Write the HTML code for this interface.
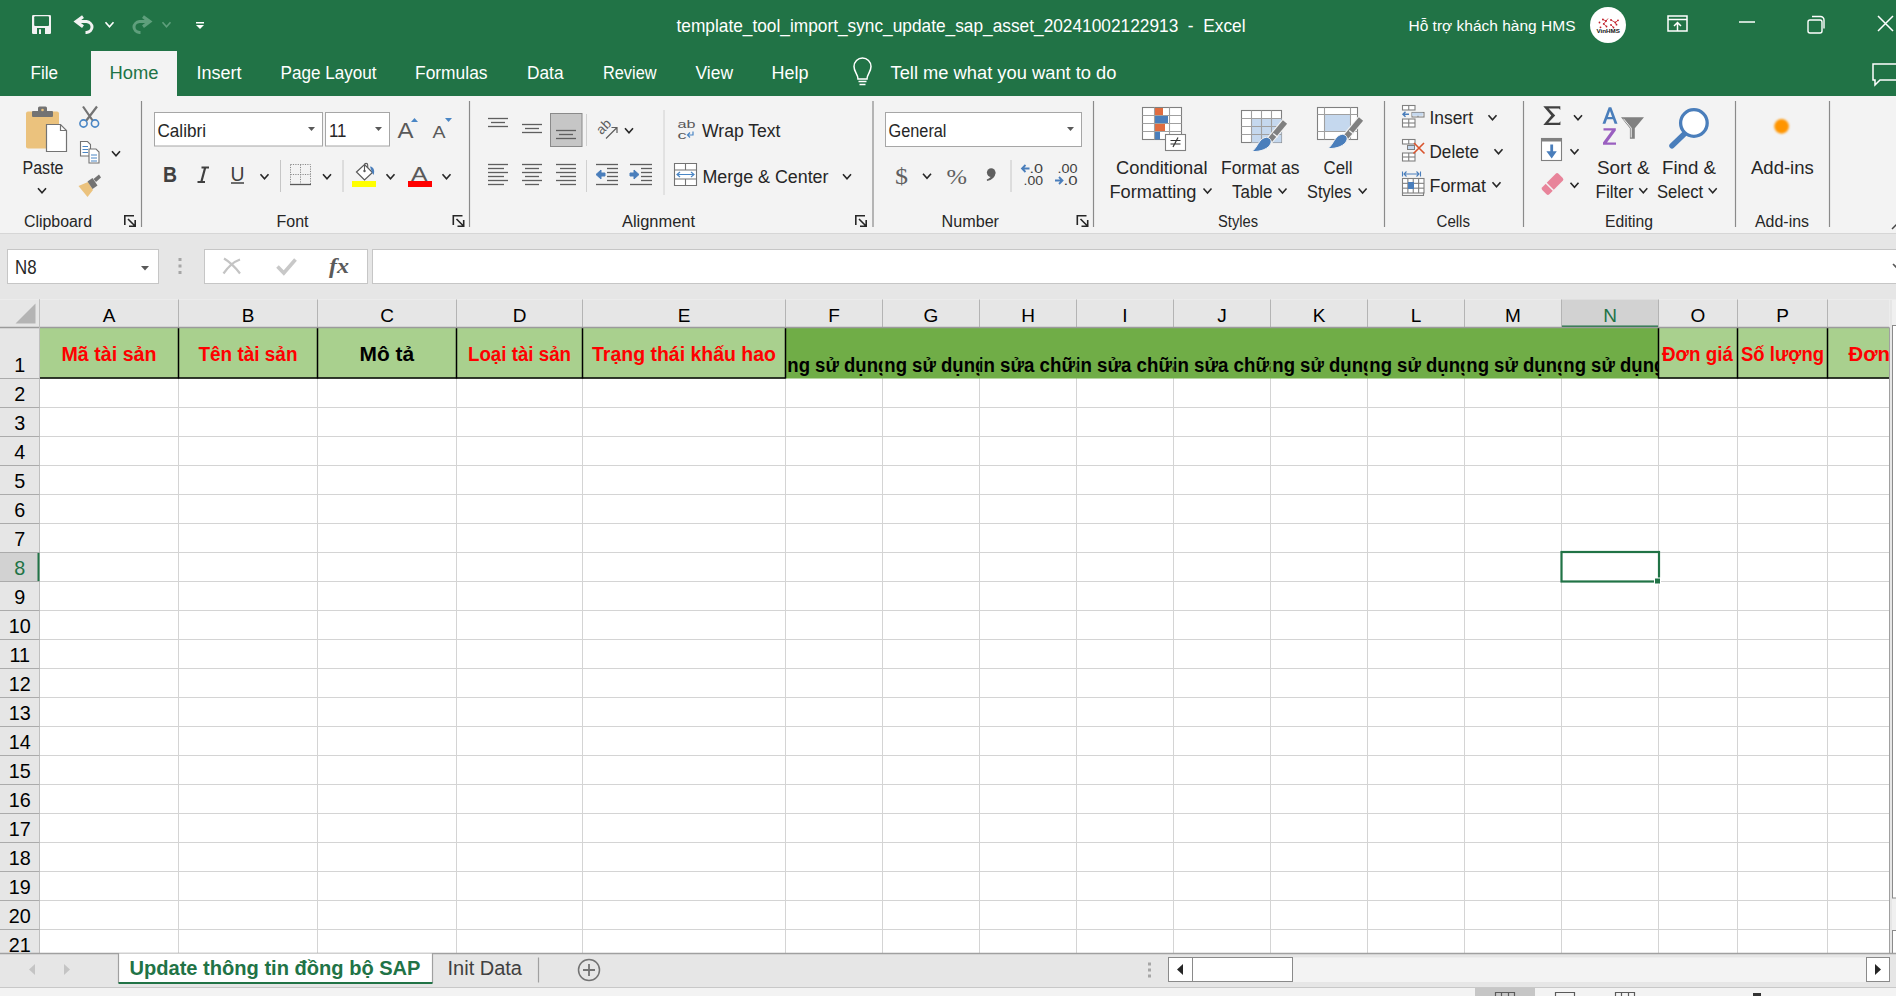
<!DOCTYPE html><html><head><meta charset="utf-8"><style>html,body{margin:0;padding:0;overflow:hidden;background:#fff}svg{display:block}text{font-family:"Liberation Sans", sans-serif}</style></head><body>
<svg width="1896" height="996" viewBox="0 0 1896 996">
<rect x="0" y="0" width="1896" height="96" fill="#217346"/>
<rect x="32" y="15" width="19" height="19" fill="#f2f2f2" rx="1.2"/>
<rect x="34.2" y="16.2" width="14.8" height="9.8" fill="#217346" rx="1"/>
<rect x="37" y="28" width="8" height="6" fill="#217346"/>
<rect x="39" y="29.3" width="2" height="4.7" fill="#f2f2f2"/>
<path d="M77,21.6 H86.5 A6.8,5.6 0 0 1 86.5,32.6 H85.5" fill="none" stroke="#f2f2f2" stroke-width="3"/>
<path d="M83,16.6 L76.2,21.6 L83,26.6" fill="none" stroke="#f2f2f2" stroke-width="3.2" stroke-linejoin="miter"/>
<path d="M105.5,22.25 L109.5,26.75 L113.5,22.25" fill="none" stroke="#ffffff" stroke-width="1.6"/>
<path d="M149,21.6 H139.5 A6.8,5.6 0 0 0 139.5,32.6 H140.5" fill="none" stroke="#5f9f7c" stroke-width="3"/>
<path d="M143,16.6 L149.8,21.6 L143,26.6" fill="none" stroke="#5f9f7c" stroke-width="3.2" stroke-linejoin="miter"/>
<path d="M162.5,22.25 L166.5,26.75 L170.5,22.25" fill="none" stroke="#5f9f7c" stroke-width="1.6"/>
<rect x="196" y="22" width="8" height="1.5" fill="#ffffff"/>
<path d="M196,25 h8 l-4,4 z" fill="#ffffff" stroke="none" stroke-width="1"/>
<text x="676.5" y="32" font-size="18.2" fill="#ffffff" font-weight="normal" textLength="569.0" lengthAdjust="spacingAndGlyphs">template_tool_import_sync_update_sap_asset_20241002122913  -  Excel</text>
<text x="1408.5" y="31" font-size="15.5" fill="#ffffff" font-weight="normal" textLength="167.0" lengthAdjust="spacingAndGlyphs">Hỗ trợ khách hàng HMS</text>
<circle cx="1608" cy="25" r="18" fill="#ffffff"/>
<path d="M1602.9,19.5 L1606,21 L1608,18.5 M1606,21 L1603.7,23.9 L1606.5,26.5 M1611,24.9 L1613.5,27.5 M1615.3,22.5 L1618,20.3 M1615.3,22.5 L1616.5,24.7 M1611,20 L1615.3,22.5" fill="none" stroke="#c0202a" stroke-width="0.8"/>
<circle cx="1599.5" cy="22.5" r="0.9" fill="#c0202a"/>
<circle cx="1602.9" cy="19.5" r="0.9" fill="#c0202a"/>
<circle cx="1606" cy="21" r="0.9" fill="#c0202a"/>
<circle cx="1603.7" cy="23.9" r="0.9" fill="#c0202a"/>
<circle cx="1606.5" cy="26.5" r="0.9" fill="#c0202a"/>
<circle cx="1600.5" cy="27.3" r="0.9" fill="#c0202a"/>
<circle cx="1611" cy="20" r="0.9" fill="#c0202a"/>
<circle cx="1611" cy="24.9" r="0.9" fill="#c0202a"/>
<circle cx="1613.5" cy="27.5" r="0.9" fill="#c0202a"/>
<circle cx="1615.3" cy="22.5" r="0.9" fill="#c0202a"/>
<circle cx="1618" cy="20.3" r="0.9" fill="#c0202a"/>
<circle cx="1616.5" cy="24.7" r="0.9" fill="#c0202a"/>
<text x="1596.5" y="32.8" font-size="5.2" fill="#111" font-weight="bold" textLength="23.5" lengthAdjust="spacingAndGlyphs">VinHMS</text>
<path d="M1668,16 h19 v15 h-19 z M1668,19.5 h19" fill="none" stroke="#ffffff" stroke-width="1.5"/>
<path d="M1677.5,31 v-8 M1674,26 l3.5,-3.5 l3.5,3.5" fill="none" stroke="#ffffff" stroke-width="1.5"/>
<line x1="1739" y1="22" x2="1755" y2="22" stroke="#ffffff" stroke-width="1.5"/>
<path d="M1810,20 h10 a2,2 0 0 1 2,2 v9 a2,2 0 0 1 -2,2 h-10 a2,2 0 0 1 -2,-2 v-9 a2,2 0 0 1 2,-2 z" fill="none" stroke="#ffffff" stroke-width="1.4"/>
<path d="M1812,16.5 h8.5 a3.5,3.5 0 0 1 3.5,3.5 v8.5" fill="none" stroke="#ffffff" stroke-width="1.4"/>
<path d="M1878,16 L1893,31 M1893,16 L1878,31" fill="none" stroke="#ffffff" stroke-width="1.5"/>
<rect x="91" y="51" width="86" height="45" fill="#f3f3f3"/>
<text x="30.5" y="79" font-size="18.3" fill="#ffffff" font-weight="normal" textLength="27.5" lengthAdjust="spacingAndGlyphs">File</text>
<text x="109.5" y="79" font-size="18.3" fill="#217346" font-weight="normal" textLength="49.0" lengthAdjust="spacingAndGlyphs">Home</text>
<text x="196.5" y="79" font-size="18.3" fill="#ffffff" font-weight="normal" textLength="45.0" lengthAdjust="spacingAndGlyphs">Insert</text>
<text x="280.5" y="79" font-size="18.3" fill="#ffffff" font-weight="normal" textLength="96.0" lengthAdjust="spacingAndGlyphs">Page Layout</text>
<text x="415.0" y="79" font-size="18.3" fill="#ffffff" font-weight="normal" textLength="72.5" lengthAdjust="spacingAndGlyphs">Formulas</text>
<text x="527.0" y="79" font-size="18.3" fill="#ffffff" font-weight="normal" textLength="36.5" lengthAdjust="spacingAndGlyphs">Data</text>
<text x="603.0" y="79" font-size="18.3" fill="#ffffff" font-weight="normal" textLength="53.5" lengthAdjust="spacingAndGlyphs">Review</text>
<text x="695.5" y="79" font-size="18.3" fill="#ffffff" font-weight="normal" textLength="37.5" lengthAdjust="spacingAndGlyphs">View</text>
<text x="771.5" y="79" font-size="18.3" fill="#ffffff" font-weight="normal" textLength="37.0" lengthAdjust="spacingAndGlyphs">Help</text>
<path d="M858,79 C858,74 854,72 854,66.5 A8.5,8.5 0 0 1 871,66.5 C871,72 867,74 867,79 Z" fill="none" stroke="#ffffff" stroke-width="1.5"/>
<line x1="858.5" y1="81.5" x2="866.5" y2="81.5" stroke="#ffffff" stroke-width="1.5"/>
<line x1="859.5" y1="84.5" x2="865.5" y2="84.5" stroke="#ffffff" stroke-width="1.5"/>
<text x="890.5" y="79" font-size="18.3" fill="#ffffff" font-weight="normal" textLength="226.0" lengthAdjust="spacingAndGlyphs">Tell me what you want to do</text>
<path d="M1873,64 h25 v16 h-18 l-5,5 v-5 h-2 z" fill="none" stroke="#ffffff" stroke-width="1.5"/>
<rect x="0" y="96" width="1896" height="137.5" fill="#f3f3f3"/>
<line x1="0" y1="233.5" x2="1896" y2="233.5" stroke="#d6d6d6" stroke-width="1"/>
<line x1="141.5" y1="101" x2="141.5" y2="227" stroke="#8a8a8a" stroke-width="1.2"/>
<line x1="469.5" y1="101" x2="469.5" y2="227" stroke="#8a8a8a" stroke-width="1.2"/>
<line x1="873" y1="101" x2="873" y2="227" stroke="#8a8a8a" stroke-width="1.2"/>
<line x1="1093.5" y1="101" x2="1093.5" y2="227" stroke="#8a8a8a" stroke-width="1.2"/>
<line x1="1384.5" y1="101" x2="1384.5" y2="227" stroke="#8a8a8a" stroke-width="1.2"/>
<line x1="1523.5" y1="101" x2="1523.5" y2="227" stroke="#8a8a8a" stroke-width="1.2"/>
<line x1="1735.5" y1="101" x2="1735.5" y2="227" stroke="#8a8a8a" stroke-width="1.2"/>
<line x1="1829.5" y1="101" x2="1829.5" y2="227" stroke="#8a8a8a" stroke-width="1.2"/>
<text x="24.0" y="227" font-size="16" fill="#262626" font-weight="normal" textLength="68.0" lengthAdjust="spacingAndGlyphs">Clipboard</text>
<text x="276.5" y="227" font-size="16" fill="#262626" font-weight="normal" textLength="32.0" lengthAdjust="spacingAndGlyphs">Font</text>
<text x="622.0" y="227" font-size="16" fill="#262626" font-weight="normal" textLength="73.0" lengthAdjust="spacingAndGlyphs">Alignment</text>
<text x="941.5" y="227" font-size="16" fill="#262626" font-weight="normal" textLength="57.5" lengthAdjust="spacingAndGlyphs">Number</text>
<text x="1218.0" y="227" font-size="16" fill="#262626" font-weight="normal" textLength="40.0" lengthAdjust="spacingAndGlyphs">Styles</text>
<text x="1436.5" y="227" font-size="16" fill="#262626" font-weight="normal" textLength="33.5" lengthAdjust="spacingAndGlyphs">Cells</text>
<text x="1605.0" y="227" font-size="16" fill="#262626" font-weight="normal" textLength="48.0" lengthAdjust="spacingAndGlyphs">Editing</text>
<text x="1755.0" y="227" font-size="16" fill="#262626" font-weight="normal" textLength="54.0" lengthAdjust="spacingAndGlyphs">Add-ins</text>
<path d="M124.8,225 V215.8 H134" fill="none" stroke="#262626" stroke-width="1.6"/>
<path d="M128,219 L135,226 M135.2,220 V226.2 H129" fill="none" stroke="#262626" stroke-width="1.6"/>
<path d="M453.3,225 V215.8 H462.5" fill="none" stroke="#262626" stroke-width="1.6"/>
<path d="M456.5,219 L463.5,226 M463.7,220 V226.2 H457.5" fill="none" stroke="#262626" stroke-width="1.6"/>
<path d="M855.8,225 V215.8 H865" fill="none" stroke="#262626" stroke-width="1.6"/>
<path d="M859,219 L866,226 M866.2,220 V226.2 H860" fill="none" stroke="#262626" stroke-width="1.6"/>
<path d="M1077.3,225 V215.8 H1086.5" fill="none" stroke="#262626" stroke-width="1.6"/>
<path d="M1080.5,219 L1087.5,226 M1087.7,220 V226.2 H1081.5" fill="none" stroke="#262626" stroke-width="1.6"/>
<path d="M1892,229 l5,-5 l5,5" fill="none" stroke="#444" stroke-width="1.5"/>
<rect x="26" y="111.5" width="33" height="37" fill="#ebc27d" rx="2"/>
<rect x="32" y="111" width="21" height="6" fill="#737373" rx="1"/>
<rect x="38" y="106.5" width="9" height="6" fill="#737373" rx="1.5"/>
<circle cx="42.5" cy="110" r="1.3" fill="#ebc27d"/>
<path d="M46.5,124.5 h14 l6,6 v21 h-20 z" fill="#ffffff" stroke="#737373" stroke-width="1.2"/>
<path d="M60.5,124.5 v6 h6" fill="none" stroke="#737373" stroke-width="1.2"/>
<text x="22.5" y="173.5" font-size="18.3" fill="#262626" font-weight="normal" textLength="41.0" lengthAdjust="spacingAndGlyphs">Paste</text>
<path d="M38.0,188.25 L42,192.75 L46.0,188.25" fill="none" stroke="#262626" stroke-width="1.6"/>
<path d="M83,106.5 L93,121 M97,106.5 L86,121" fill="none" stroke="#737373" stroke-width="2.2"/>
<circle cx="83.5" cy="123.5" r="3.6" fill="none" stroke="#4a86c5" stroke-width="1.6"/>
<circle cx="95" cy="123.5" r="3.6" fill="none" stroke="#4a86c5" stroke-width="1.6"/>
<path d="M80.5,141.5 h7 l3,3 v11.5 h-10 z" fill="#fff" stroke="#737373" stroke-width="1.1"/>
<path d="M89,149 h7 l3,3 v11 h-10 z" fill="#fff" stroke="#737373" stroke-width="1.1"/>
<line x1="82.5" y1="146.5" x2="88" y2="146.5" stroke="#4a86c5" stroke-width="1"/>
<line x1="82.5" y1="149.5" x2="88" y2="149.5" stroke="#4a86c5" stroke-width="1"/>
<line x1="82.5" y1="152.5" x2="88" y2="152.5" stroke="#4a86c5" stroke-width="1"/>
<line x1="91" y1="155" x2="97" y2="155" stroke="#4a86c5" stroke-width="1"/>
<line x1="91" y1="158" x2="97" y2="158" stroke="#4a86c5" stroke-width="1"/>
<line x1="91" y1="161" x2="97" y2="161" stroke="#4a86c5" stroke-width="1"/>
<path d="M112.0,151.25 L116,155.75 L120.0,151.25" fill="none" stroke="#262626" stroke-width="1.6"/>
<path d="M78.5,186 L88,182 L93,190 L87.5,197 Z" fill="#ebc27d" stroke="none" stroke-width="1"/>
<path d="M87.5,181.5 L92.5,178 L97.5,185.5 L92.5,189 Z" fill="#737373" stroke="none" stroke-width="1"/>
<path d="M93.5,179 L99,174.5 L101,177.5 L96,182 Z" fill="#737373" stroke="none" stroke-width="1"/>
<rect x="154.5" y="112.5" width="168" height="33.5" fill="#ffffff" stroke="#a6a6a6" stroke-width="1"/>
<text x="157.5" y="137" font-size="18.5" fill="#262626" font-weight="normal" textLength="48.5" lengthAdjust="spacingAndGlyphs">Calibri</text>
<path d="M308,127 h7 l-3.5,4 z" fill="#595959" stroke="none" stroke-width="1"/>
<rect x="325.5" y="112.5" width="64" height="33.5" fill="#ffffff" stroke="#a6a6a6" stroke-width="1"/>
<text x="329.0" y="137" font-size="18.5" fill="#262626" font-weight="normal" textLength="17.5" lengthAdjust="spacingAndGlyphs">11</text>
<path d="M375,127 h7 l-3.5,4 z" fill="#595959" stroke="none" stroke-width="1"/>
<text x="397.5" y="138" font-size="21.5" fill="#595959" font-weight="normal" textLength="16.0" lengthAdjust="spacingAndGlyphs">A</text>
<path d="M411,122 l3.5,-4 l3.5,4 z" fill="#4a86c5" stroke="none" stroke-width="1"/>
<text x="432.5" y="138" font-size="17" fill="#595959" font-weight="normal" textLength="13.0" lengthAdjust="spacingAndGlyphs">A</text>
<path d="M445,118 h7 l-3.5,4 z" fill="#4a86c5" stroke="none" stroke-width="1"/>
<text x="163.0" y="181.8" font-size="22.5" fill="#404040" font-weight="bold" textLength="14.0" lengthAdjust="spacingAndGlyphs">B</text>
<path d="M201.5,167.5 h7.5 M197.5,182 h7.5 M205.2,167.5 L201.3,182" fill="none" stroke="#404040" stroke-width="2.2"/>
<text x="230.5" y="181" font-size="21" fill="#404040" font-weight="normal" textLength="14.0" lengthAdjust="spacingAndGlyphs">U</text>
<line x1="231" y1="183" x2="244" y2="183" stroke="#404040" stroke-width="1.5"/>
<path d="M260.5,174.25 L264.5,178.75 L268.5,174.25" fill="none" stroke="#262626" stroke-width="1.6"/>
<line x1="280.5" y1="160" x2="280.5" y2="192" stroke="#c6c6c6" stroke-width="1"/>
<path d="M290.5,164.5 h20 v20 M290.5,164.5 v20 M300.5,164.5 v20 M290.5,174.5 h20" fill="none" stroke="#8a8a8a" stroke-width="1" stroke-dasharray="1.2,1.2"/>
<line x1="290" y1="184.5" x2="311" y2="184.5" stroke="#595959" stroke-width="1.3"/>
<path d="M323.0,174.25 L327,178.75 L331.0,174.25" fill="none" stroke="#262626" stroke-width="1.6"/>
<line x1="343" y1="160" x2="343" y2="192" stroke="#c6c6c6" stroke-width="1"/>
<path d="M356.5,172 L364.5,164.5 L372.5,172.5 L364.5,180 Z" fill="#fff" stroke="#595959" stroke-width="1.2"/>
<path d="M364.5,171 V165 a1.6,1.6 0 0 1 3.2,0 V168" fill="none" stroke="#595959" stroke-width="1.1"/>
<circle cx="364.5" cy="171" r="1.2" fill="#595959"/>
<path d="M370,166.5 C374,167 375,171 373.5,175 L372,172.5 Z" fill="#4a7ebb" stroke="none" stroke-width="1"/>
<rect x="352" y="181" width="24" height="6" fill="#ffff00"/>
<path d="M386.5,174.25 L390.5,178.75 L394.5,174.25" fill="none" stroke="#262626" stroke-width="1.6"/>
<text x="411.0" y="180.5" font-size="20" fill="#595959" font-weight="normal" textLength="16.5" lengthAdjust="spacingAndGlyphs">A</text>
<rect x="408" y="181" width="24" height="6" fill="#ff0000"/>
<path d="M442.5,174.25 L446.5,178.75 L450.5,174.25" fill="none" stroke="#262626" stroke-width="1.6"/>
<line x1="488" y1="118.5" x2="508" y2="118.5" stroke="#5f5f5f" stroke-width="1.3"/>
<line x1="488" y1="126.5" x2="508" y2="126.5" stroke="#5f5f5f" stroke-width="1.3"/>
<line x1="491" y1="122.5" x2="505" y2="122.5" stroke="#5f5f5f" stroke-width="1.3"/>
<line x1="522" y1="124.5" x2="542" y2="124.5" stroke="#5f5f5f" stroke-width="1.3"/>
<line x1="522" y1="132.5" x2="542" y2="132.5" stroke="#5f5f5f" stroke-width="1.3"/>
<line x1="525" y1="128.5" x2="539" y2="128.5" stroke="#5f5f5f" stroke-width="1.3"/>
<rect x="550.5" y="113.5" width="31.5" height="33" fill="#c6c6c6" stroke="#8a8a8a" stroke-width="1"/>
<line x1="556" y1="130.5" x2="576" y2="130.5" stroke="#5f5f5f" stroke-width="1.3"/>
<line x1="556" y1="138.5" x2="576" y2="138.5" stroke="#5f5f5f" stroke-width="1.3"/>
<line x1="559" y1="134.5" x2="573" y2="134.5" stroke="#5f5f5f" stroke-width="1.3"/>
<line x1="586.5" y1="114" x2="586.5" y2="146" stroke="#d0d0d0" stroke-width="1"/>
<text x="596.5" y="131" font-size="13.5" fill="#5f5f5f" font-weight="normal" textLength="15.0" lengthAdjust="spacingAndGlyphs" transform="rotate(-45 604 127)">ab</text>
<path d="M606,138.5 L616.5,128 M611.5,127.5 h5.5 v5.5" fill="none" stroke="#5f5f5f" stroke-width="1.2"/>
<path d="M625.0,128.25 L629,132.75 L633.0,128.25" fill="none" stroke="#262626" stroke-width="1.6"/>
<line x1="664" y1="110" x2="664" y2="195" stroke="#d0d0d0" stroke-width="1"/>
<text x="677.5" y="128" font-size="11.5" fill="#595959" font-weight="normal" textLength="18.0" lengthAdjust="spacingAndGlyphs">ab</text>
<text x="677.5" y="139" font-size="11.5" fill="#595959" font-weight="normal" textLength="9.0" lengthAdjust="spacingAndGlyphs">c</text>
<path d="M693,131.5 v3.5 h-5 M690,132.5 l-2.5,2.5 l2.5,2.5" fill="none" stroke="#4a86c5" stroke-width="1.2"/>
<text x="702.0" y="136.9" font-size="18.3" fill="#262626" font-weight="normal" textLength="78.5" lengthAdjust="spacingAndGlyphs">Wrap Text</text>
<line x1="488" y1="164.5" x2="508" y2="164.5" stroke="#5f5f5f" stroke-width="1.3"/>
<line x1="488" y1="172.5" x2="508" y2="172.5" stroke="#5f5f5f" stroke-width="1.3"/>
<line x1="488" y1="180.5" x2="508" y2="180.5" stroke="#5f5f5f" stroke-width="1.3"/>
<line x1="488" y1="168.5" x2="504" y2="168.5" stroke="#5f5f5f" stroke-width="1.3"/>
<line x1="488" y1="176.5" x2="504" y2="176.5" stroke="#5f5f5f" stroke-width="1.3"/>
<line x1="488" y1="184.5" x2="504" y2="184.5" stroke="#5f5f5f" stroke-width="1.3"/>
<line x1="522" y1="164.5" x2="542" y2="164.5" stroke="#5f5f5f" stroke-width="1.3"/>
<line x1="522" y1="172.5" x2="542" y2="172.5" stroke="#5f5f5f" stroke-width="1.3"/>
<line x1="522" y1="180.5" x2="542" y2="180.5" stroke="#5f5f5f" stroke-width="1.3"/>
<line x1="525" y1="168.5" x2="539" y2="168.5" stroke="#5f5f5f" stroke-width="1.3"/>
<line x1="525" y1="176.5" x2="539" y2="176.5" stroke="#5f5f5f" stroke-width="1.3"/>
<line x1="525" y1="184.5" x2="539" y2="184.5" stroke="#5f5f5f" stroke-width="1.3"/>
<line x1="556" y1="164.5" x2="576" y2="164.5" stroke="#5f5f5f" stroke-width="1.3"/>
<line x1="556" y1="172.5" x2="576" y2="172.5" stroke="#5f5f5f" stroke-width="1.3"/>
<line x1="556" y1="180.5" x2="576" y2="180.5" stroke="#5f5f5f" stroke-width="1.3"/>
<line x1="560" y1="168.5" x2="576" y2="168.5" stroke="#5f5f5f" stroke-width="1.3"/>
<line x1="560" y1="176.5" x2="576" y2="176.5" stroke="#5f5f5f" stroke-width="1.3"/>
<line x1="560" y1="184.5" x2="576" y2="184.5" stroke="#5f5f5f" stroke-width="1.3"/>
<line x1="586.5" y1="160" x2="586.5" y2="192" stroke="#d0d0d0" stroke-width="1"/>
<line x1="596" y1="164.5" x2="618" y2="164.5" stroke="#5f5f5f" stroke-width="1.3"/>
<line x1="596" y1="184.5" x2="618" y2="184.5" stroke="#5f5f5f" stroke-width="1.3"/>
<line x1="607" y1="168.5" x2="618" y2="168.5" stroke="#5f5f5f" stroke-width="1.3"/>
<line x1="607" y1="172.5" x2="618" y2="172.5" stroke="#5f5f5f" stroke-width="1.3"/>
<line x1="607" y1="176.5" x2="618" y2="176.5" stroke="#5f5f5f" stroke-width="1.3"/>
<line x1="607" y1="180.5" x2="618" y2="180.5" stroke="#5f5f5f" stroke-width="1.3"/>
<path d="M605,173 h-4 v-3 l-5,4.5 l5,4.5 v-3 h4 z" fill="#4a7ebb" stroke="#4a7ebb" stroke-width="1"/>
<line x1="630" y1="164.5" x2="652" y2="164.5" stroke="#5f5f5f" stroke-width="1.3"/>
<line x1="630" y1="184.5" x2="652" y2="184.5" stroke="#5f5f5f" stroke-width="1.3"/>
<line x1="641" y1="168.5" x2="652" y2="168.5" stroke="#5f5f5f" stroke-width="1.3"/>
<line x1="641" y1="172.5" x2="652" y2="172.5" stroke="#5f5f5f" stroke-width="1.3"/>
<line x1="641" y1="176.5" x2="652" y2="176.5" stroke="#5f5f5f" stroke-width="1.3"/>
<line x1="641" y1="180.5" x2="652" y2="180.5" stroke="#5f5f5f" stroke-width="1.3"/>
<path d="M630,173 h4 v-3 l5,4.5 l-5,4.5 v-3 h-4 z" fill="#4a7ebb" stroke="#4a7ebb" stroke-width="1"/>
<path d="M674.5,163.5 h22 v22 h-22 z M674.5,170 h22 M674.5,179 h22 M685.5,163.5 v6.5 M685.5,179 v6.5" fill="#fff" stroke="#737373" stroke-width="1.1"/>
<path d="M677,174.5 h17 M680,172 l-3,2.5 l3,2.5 M691,172 l3,2.5 l-3,2.5" fill="none" stroke="#4a86c5" stroke-width="1.2"/>
<text x="702.5" y="183" font-size="18.3" fill="#262626" font-weight="normal" textLength="126.0" lengthAdjust="spacingAndGlyphs">Merge &amp; Center</text>
<path d="M843.0,174.25 L847,178.75 L851.0,174.25" fill="none" stroke="#262626" stroke-width="1.6"/>
<rect x="885.5" y="112.5" width="196" height="34" fill="#ffffff" stroke="#a6a6a6" stroke-width="1"/>
<text x="888.5" y="136.6" font-size="18.3" fill="#262626" font-weight="normal" textLength="58.0" lengthAdjust="spacingAndGlyphs">General</text>
<path d="M1067,127 h7 l-3.5,4 z" fill="#595959" stroke="none" stroke-width="1"/>
<text x="895.0" y="184.3" font-size="24" fill="#5f5f5f" font-weight="normal" textLength="13.0" lengthAdjust="spacingAndGlyphs" style="font-family:'Liberation Serif',serif">$</text>
<path d="M923.0,173.75 L927,178.25 L931.0,173.75" fill="none" stroke="#262626" stroke-width="1.6"/>
<text x="946.5" y="184" font-size="20" fill="#5f5f5f" font-weight="normal" textLength="20.5" lengthAdjust="spacingAndGlyphs" style="font-family:'Liberation Serif',serif">%</text>
<circle cx="991.2" cy="172.6" r="4.3" fill="#5f5f5f"/>
<path d="M995.3,172.5 C995.5,177 992,180 987,181 L986.8,179.6 C990,178.5 991.5,176.5 991.8,174 Z" fill="#5f5f5f" stroke="none" stroke-width="1"/>
<line x1="1011" y1="160" x2="1011" y2="192" stroke="#c6c6c6" stroke-width="1"/>
<text x="1029.5" y="172.7" font-size="12" fill="#404040" font-weight="normal" textLength="13.5" lengthAdjust="spacingAndGlyphs">.0</text>
<text x="1023.5" y="184.8" font-size="12" fill="#404040" font-weight="normal" textLength="19.5" lengthAdjust="spacingAndGlyphs">.00</text>
<path d="M1029.5,168.5 h-7 M1025.5,165 l-3.5,3.5 l3.5,3.5" fill="none" stroke="#4a7ebb" stroke-width="1.8"/>
<text x="1057.5" y="172.7" font-size="12" fill="#404040" font-weight="normal" textLength="20.0" lengthAdjust="spacingAndGlyphs">.00</text>
<text x="1063.5" y="184.8" font-size="12" fill="#404040" font-weight="normal" textLength="14.0" lengthAdjust="spacingAndGlyphs">.0</text>
<path d="M1055,180.5 h7 M1059,177 l3.5,3.5 l-3.5,3.5" fill="none" stroke="#4a7ebb" stroke-width="1.8"/>
<rect x="1142.5" y="107.5" width="39" height="32" fill="#ffffff" stroke="#808080" stroke-width="1.1"/>
<rect x="1155" y="108" width="8" height="7" fill="#e06c3f"/>
<rect x="1155" y="115.5" width="13" height="8" fill="#4a7ebb"/>
<rect x="1155" y="123.5" width="10" height="8" fill="#e06c3f"/>
<rect x="1155" y="131.5" width="5" height="8" fill="#4a7ebb"/>
<line x1="1142.5" y1="115.5" x2="1181.5" y2="115.5" stroke="#a0a0a0" stroke-width="1.1"/>
<line x1="1142.5" y1="123.5" x2="1181.5" y2="123.5" stroke="#a0a0a0" stroke-width="1.1"/>
<line x1="1142.5" y1="131.5" x2="1181.5" y2="131.5" stroke="#a0a0a0" stroke-width="1.1"/>
<line x1="1154.5" y1="107.5" x2="1154.5" y2="139.5" stroke="#a0a0a0" stroke-width="1.1"/>
<line x1="1169.5" y1="107.5" x2="1169.5" y2="139.5" stroke="#a0a0a0" stroke-width="1.1"/>
<rect x="1165.5" y="134.5" width="20" height="16" fill="#ffffff" stroke="#808080" stroke-width="1.1"/>
<path d="M1170.5,140.5 h10 M1170.5,144 h10 M1178,137.5 L1173,147" fill="none" stroke="#333" stroke-width="1.2"/>
<text x="1116.0" y="173.7" font-size="18.3" fill="#262626" font-weight="normal" textLength="91.5" lengthAdjust="spacingAndGlyphs">Conditional</text>
<text x="1109.5" y="197.7" font-size="18.3" fill="#262626" font-weight="normal" textLength="87.0" lengthAdjust="spacingAndGlyphs">Formatting</text>
<path d="M1203.5,188.55 L1207.5,193.05 L1211.5,188.55" fill="none" stroke="#262626" stroke-width="1.5"/>
<rect x="1241.5" y="110.5" width="40" height="32" fill="#ffffff" stroke="#808080" stroke-width="1.1"/>
<rect x="1251.5" y="118.5" width="30" height="24" fill="#c5d8ee"/>
<line x1="1241.5" y1="118.5" x2="1281.5" y2="118.5" stroke="#a0a0a0" stroke-width="1.1"/>
<line x1="1241.5" y1="126.5" x2="1281.5" y2="126.5" stroke="#a0a0a0" stroke-width="1.1"/>
<line x1="1241.5" y1="134.5" x2="1281.5" y2="134.5" stroke="#a0a0a0" stroke-width="1.1"/>
<line x1="1251.5" y1="110.5" x2="1251.5" y2="142.5" stroke="#a0a0a0" stroke-width="1.1"/>
<line x1="1261.5" y1="110.5" x2="1261.5" y2="142.5" stroke="#a0a0a0" stroke-width="1.1"/>
<line x1="1271.5" y1="110.5" x2="1271.5" y2="142.5" stroke="#a0a0a0" stroke-width="1.1"/>
<line x1="1269" y1="141" x2="1285" y2="122" stroke="#f3f3f3" stroke-width="7.5"/>
<line x1="1270" y1="140" x2="1285" y2="122" stroke="#808080" stroke-width="5.5"/>
<line x1="1273.2" y1="133.5" x2="1277.8" y2="137.2" stroke="#f3f3f3" stroke-width="1.3"/>
<path d="M1252,151.5 C1257,148 1259,139 1265,137.5 C1269,136.5 1272,140 1271,143 C1269,149 1260,152 1252,151.5 Z" fill="#4a7ebb" stroke="#f3f3f3" stroke-width="1"/>
<text x="1221.0" y="173.7" font-size="18.3" fill="#262626" font-weight="normal" textLength="78.5" lengthAdjust="spacingAndGlyphs">Format as</text>
<text x="1232.0" y="197.7" font-size="18.3" fill="#262626" font-weight="normal" textLength="40.5" lengthAdjust="spacingAndGlyphs">Table</text>
<path d="M1278.5,188.55 L1282.5,193.05 L1286.5,188.55" fill="none" stroke="#262626" stroke-width="1.5"/>
<rect x="1317.5" y="107.5" width="40" height="32" fill="#ffffff" stroke="#808080" stroke-width="1.1"/>
<rect x="1324.5" y="114.5" width="26" height="17" fill="#c5d8ee"/>
<line x1="1317.5" y1="114.5" x2="1357.5" y2="114.5" stroke="#a0a0a0" stroke-width="1.1"/>
<line x1="1317.5" y1="131.5" x2="1357.5" y2="131.5" stroke="#a0a0a0" stroke-width="1.1"/>
<line x1="1324.5" y1="107.5" x2="1324.5" y2="139.5" stroke="#a0a0a0" stroke-width="1.1"/>
<line x1="1350.5" y1="107.5" x2="1350.5" y2="139.5" stroke="#a0a0a0" stroke-width="1.1"/>
<line x1="1345" y1="138" x2="1361" y2="119" stroke="#f3f3f3" stroke-width="7.5"/>
<line x1="1346" y1="137" x2="1361" y2="119" stroke="#808080" stroke-width="5.5"/>
<line x1="1349.2" y1="130.5" x2="1353.8" y2="134.2" stroke="#f3f3f3" stroke-width="1.3"/>
<path d="M1328,148.5 C1333,145 1335,136 1341,134.5 C1345,133.5 1348,137 1347,140 C1345,146 1336,149 1328,148.5 Z" fill="#4a7ebb" stroke="#f3f3f3" stroke-width="1"/>
<text x="1323.5" y="173.7" font-size="18.3" fill="#262626" font-weight="normal" textLength="29.0" lengthAdjust="spacingAndGlyphs">Cell</text>
<text x="1307.0" y="197.7" font-size="18.3" fill="#262626" font-weight="normal" textLength="44.5" lengthAdjust="spacingAndGlyphs">Styles</text>
<path d="M1358.6,188.55 L1362.6,193.05 L1366.6,188.55" fill="none" stroke="#262626" stroke-width="1.5"/>
<rect x="1402.5" y="105.5" width="12.5" height="4.5" fill="#ffffff" stroke="#808080" stroke-width="1.1"/>
<line x1="1408.75" y1="105.5" x2="1408.75" y2="110.0" stroke="#808080" stroke-width="1.1"/>
<rect x="1402.5" y="119.0" width="12.5" height="8" fill="#ffffff" stroke="#808080" stroke-width="1.1"/>
<line x1="1408.75" y1="119.0" x2="1408.75" y2="127.0" stroke="#808080" stroke-width="1.1"/>
<line x1="1402.5" y1="123.0" x2="1415.0" y2="123.0" stroke="#808080" stroke-width="1.1"/>
<rect x="1412.0" y="112.5" width="12" height="4.5" fill="#ffffff" stroke="#808080" stroke-width="1.1"/>
<line x1="1418.0" y1="112.5" x2="1418.0" y2="117.0" stroke="#808080" stroke-width="1.1"/>
<rect x="1412.2" y="112.7" width="10.6" height="3.1" fill="#c5d8ee"/>
<path d="M1409,114.3 h-6 M1405.5,111.8 l-2.5,2.5 l2.5,2.5" fill="none" stroke="#4a7ebb" stroke-width="1.5"/>
<text x="1429.5" y="124" font-size="18.3" fill="#262626" font-weight="normal" textLength="43.5" lengthAdjust="spacingAndGlyphs">Insert</text>
<path d="M1488.5,115.25 L1492.5,119.75 L1496.5,115.25" fill="none" stroke="#262626" stroke-width="1.6"/>
<rect x="1402.5" y="139.5" width="12.5" height="4.5" fill="#ffffff" stroke="#808080" stroke-width="1.1"/>
<line x1="1408.75" y1="139.5" x2="1408.75" y2="144.0" stroke="#808080" stroke-width="1.1"/>
<rect x="1402.5" y="153.0" width="12.5" height="8" fill="#ffffff" stroke="#808080" stroke-width="1.1"/>
<line x1="1408.75" y1="153.0" x2="1408.75" y2="161.0" stroke="#808080" stroke-width="1.1"/>
<line x1="1402.5" y1="157.0" x2="1415.0" y2="157.0" stroke="#808080" stroke-width="1.1"/>
<rect x="1407.5" y="145.5" width="7" height="4" fill="#c5d8ee" stroke="#808080" stroke-width="1"/>
<path d="M1414,143 L1424.5,153.5 M1424,143 L1413.5,153.5" fill="none" stroke="#d9532c" stroke-width="1.6"/>
<text x="1429.5" y="158" font-size="18.3" fill="#262626" font-weight="normal" textLength="49.5" lengthAdjust="spacingAndGlyphs">Delete</text>
<path d="M1494.5,149.25 L1498.5,153.75 L1502.5,149.25" fill="none" stroke="#262626" stroke-width="1.6"/>
<rect x="1402.5" y="178.5" width="21.5" height="14.5" fill="#ffffff" stroke="#808080" stroke-width="1.1"/>
<line x1="1407.875" y1="178.5" x2="1407.875" y2="193.0" stroke="#808080" stroke-width="1.1"/>
<line x1="1413.25" y1="178.5" x2="1413.25" y2="193.0" stroke="#808080" stroke-width="1.1"/>
<line x1="1418.625" y1="178.5" x2="1418.625" y2="193.0" stroke="#808080" stroke-width="1.1"/>
<line x1="1402.5" y1="183.33333333333334" x2="1424.0" y2="183.33333333333334" stroke="#808080" stroke-width="1.1"/>
<line x1="1402.5" y1="188.16666666666666" x2="1424.0" y2="188.16666666666666" stroke="#808080" stroke-width="1.1"/>
<rect x="1408" y="182" width="6" height="7" fill="#4a7ebb"/>
<path d="M1402.5,192.5 v3 h21 v-3" fill="none" stroke="#808080" stroke-width="1.1"/>
<path d="M1404,174 h15 M1406.5,171.5 l-2.5,2.5 l2.5,2.5 M1416.5,171.5 l2.5,2.5 l-2.5,2.5 M1402.5,171.5 v5 M1420.5,171.5 v5" fill="none" stroke="#4a7ebb" stroke-width="1.1"/>
<text x="1429.5" y="192" font-size="18.3" fill="#262626" font-weight="normal" textLength="56.5" lengthAdjust="spacingAndGlyphs">Format</text>
<path d="M1492.5,182.25 L1496.5,186.75 L1500.5,182.25" fill="none" stroke="#262626" stroke-width="1.6"/>
<path d="M1543.3,106.2 H1560.3 V110 L1559,108.5 H1548.6 L1555.2,115.6 L1548.3,122.8 H1559.2 L1560.4,121.2 V124.9 H1543.3 L1551.3,115.6 Z" fill="#404040" stroke="none" stroke-width="1"/>
<path d="M1574.0,115.25 L1578,119.75 L1582.0,115.25" fill="none" stroke="#262626" stroke-width="1.6"/>
<rect x="1541.5" y="138.5" width="20" height="22" fill="#ffffff" stroke="#808080" stroke-width="1.1"/>
<rect x="1541" y="138" width="21" height="3.5" fill="#808080"/>
<path d="M1550.3,144.6 H1553.1 V151.3 H1556.8 L1551.7,158.6 L1546.4,151.3 H1550.3 Z" fill="#4a7ebb" stroke="none" stroke-width="1"/>
<path d="M1570.5,149.25 L1574.5,153.75 L1578.5,149.25" fill="none" stroke="#262626" stroke-width="1.6"/>
<rect x="1541" y="179" width="23" height="10" rx="2" fill="#e8849a" transform="rotate(-45 1552.5 184)"/>
<line x1="1545.7" y1="182.8" x2="1553.7" y2="190.8" stroke="#f3f3f3" stroke-width="1.6"/>
<path d="M1570.5,182.75 L1574.5,187.25 L1578.5,182.75" fill="none" stroke="#262626" stroke-width="1.6"/>
<path d="M1602.5,123.8 L1608.7,107.3 L1611.3,107.3 L1617.5,123.8 H1614.6 L1613,119.3 H1607 L1605.4,123.8 Z M1607.9,116.9 H1612.1 L1610,111 Z" fill="#4a7ebb" stroke="none" stroke-width="1"/>
<path d="M1603.5,128.2 H1615.8 V130.6 L1607,142.4 H1616 V144.8 H1603 V142.4 L1611.8,130.6 H1603.5 Z" fill="#9a5fc0" stroke="none" stroke-width="1"/>
<path d="M1621,117.2 H1644 L1634.8,128.2 V138.8 H1629.9 V128.2 Z" fill="#808080" stroke="none" stroke-width="1"/>
<path d="M1623.5,118.8 L1631.2,128 V137.5" fill="none" stroke="#ffffff" stroke-width="0.9"/>
<text x="1597.0" y="173.7" font-size="18.3" fill="#262626" font-weight="normal" textLength="52.5" lengthAdjust="spacingAndGlyphs">Sort &amp;</text>
<text x="1595.5" y="197.7" font-size="18.3" fill="#262626" font-weight="normal" textLength="38.0" lengthAdjust="spacingAndGlyphs">Filter</text>
<path d="M1639.3,188.25 L1643.3,192.75 L1647.3,188.25" fill="none" stroke="#262626" stroke-width="1.5"/>
<line x1="1684" y1="134.3" x2="1672" y2="145.8" stroke="#4a7ebb" stroke-width="5.5" stroke-linecap="round"/>
<circle cx="1693.9" cy="123" r="13.3" fill="#ffffff" stroke="#4a7ebb" stroke-width="3.3"/>
<text x="1662.0" y="173.7" font-size="18.3" fill="#262626" font-weight="normal" textLength="54.0" lengthAdjust="spacingAndGlyphs">Find &amp;</text>
<text x="1657.0" y="197.7" font-size="18.3" fill="#262626" font-weight="normal" textLength="46.2" lengthAdjust="spacingAndGlyphs">Select</text>
<path d="M1708.7,188.25 L1712.7,192.75 L1716.7,188.25" fill="none" stroke="#262626" stroke-width="1.5"/>
<defs><filter id="bl" x="-50%" y="-50%" width="200%" height="200%"><feGaussianBlur stdDeviation="0.9"/></filter></defs>
<circle cx="1781.6" cy="126.4" r="7.3" fill="#ff9500" filter="url(#bl)"/>
<text x="1751.0" y="173.7" font-size="18.3" fill="#262626" font-weight="normal" textLength="62.8" lengthAdjust="spacingAndGlyphs">Add-ins</text>
<rect x="0" y="234" width="1896" height="65.5" fill="#e6e6e6"/>
<rect x="7.5" y="249.5" width="151" height="34" fill="#ffffff" stroke="#c6c6c6" stroke-width="1"/>
<text x="15.0" y="274" font-size="20.3" fill="#262626" font-weight="normal" textLength="21.5" lengthAdjust="spacingAndGlyphs">N8</text>
<path d="M141,266 h8 l-4,4.5 z" fill="#595959" stroke="none" stroke-width="1"/>
<rect x="178.5" y="258" width="3" height="3" fill="#a6a6a6"/>
<rect x="178.5" y="264.5" width="3" height="3" fill="#a6a6a6"/>
<rect x="178.5" y="271" width="3" height="3" fill="#a6a6a6"/>
<rect x="204.5" y="249.5" width="163" height="34" fill="#ffffff" stroke="#c6c6c6" stroke-width="1"/>
<path d="M224,258.5 C230,262 235,267 240,273.5 M240,259.5 C233,262 228,267 223.5,273.5" fill="none" stroke="#c4c4c4" stroke-width="2.2"/>
<path d="M277.5,266.5 L283.8,273 L295.5,259.5" fill="none" stroke="#c8c8c8" stroke-width="3.6"/>
<text x="329" y="273" font-size="21" fill="#5a5a5a" font-weight="bold" font-style="italic" style="font-family:'Liberation Serif',serif" textLength="20" lengthAdjust="spacingAndGlyphs">fx</text>
<rect x="372.5" y="249.5" width="1540" height="34" fill="#ffffff" stroke="#c6c6c6" stroke-width="1"/>
<path d="M1893,264 l5,5 l5,-5" fill="none" stroke="#595959" stroke-width="1.6"/>
<rect x="0" y="299.5" width="1889.5" height="28" fill="#e6e6e6"/>
<rect x="0" y="327.5" width="39.5" height="668.5" fill="#e6e6e6"/>
<rect x="39.5" y="327.5" width="1850.0" height="624.5" fill="#ffffff"/>
<line x1="39.5" y1="407.5" x2="1889.5" y2="407.5" stroke="#d4d4d4" stroke-width="1"/>
<line x1="39.5" y1="436.5" x2="1889.5" y2="436.5" stroke="#d4d4d4" stroke-width="1"/>
<line x1="39.5" y1="465.5" x2="1889.5" y2="465.5" stroke="#d4d4d4" stroke-width="1"/>
<line x1="39.5" y1="494.5" x2="1889.5" y2="494.5" stroke="#d4d4d4" stroke-width="1"/>
<line x1="39.5" y1="523.5" x2="1889.5" y2="523.5" stroke="#d4d4d4" stroke-width="1"/>
<line x1="39.5" y1="552.5" x2="1889.5" y2="552.5" stroke="#d4d4d4" stroke-width="1"/>
<line x1="39.5" y1="581.5" x2="1889.5" y2="581.5" stroke="#d4d4d4" stroke-width="1"/>
<line x1="39.5" y1="610.5" x2="1889.5" y2="610.5" stroke="#d4d4d4" stroke-width="1"/>
<line x1="39.5" y1="639.5" x2="1889.5" y2="639.5" stroke="#d4d4d4" stroke-width="1"/>
<line x1="39.5" y1="668.5" x2="1889.5" y2="668.5" stroke="#d4d4d4" stroke-width="1"/>
<line x1="39.5" y1="697.5" x2="1889.5" y2="697.5" stroke="#d4d4d4" stroke-width="1"/>
<line x1="39.5" y1="726.5" x2="1889.5" y2="726.5" stroke="#d4d4d4" stroke-width="1"/>
<line x1="39.5" y1="755.5" x2="1889.5" y2="755.5" stroke="#d4d4d4" stroke-width="1"/>
<line x1="39.5" y1="784.5" x2="1889.5" y2="784.5" stroke="#d4d4d4" stroke-width="1"/>
<line x1="39.5" y1="813.5" x2="1889.5" y2="813.5" stroke="#d4d4d4" stroke-width="1"/>
<line x1="39.5" y1="842.5" x2="1889.5" y2="842.5" stroke="#d4d4d4" stroke-width="1"/>
<line x1="39.5" y1="871.5" x2="1889.5" y2="871.5" stroke="#d4d4d4" stroke-width="1"/>
<line x1="39.5" y1="900.5" x2="1889.5" y2="900.5" stroke="#d4d4d4" stroke-width="1"/>
<line x1="39.5" y1="929.5" x2="1889.5" y2="929.5" stroke="#d4d4d4" stroke-width="1"/>
<line x1="39.5" y1="958.5" x2="1889.5" y2="958.5" stroke="#d4d4d4" stroke-width="1"/>
<line x1="178.5" y1="378" x2="178.5" y2="953" stroke="#d4d4d4" stroke-width="1"/>
<line x1="317.5" y1="378" x2="317.5" y2="953" stroke="#d4d4d4" stroke-width="1"/>
<line x1="456.5" y1="378" x2="456.5" y2="953" stroke="#d4d4d4" stroke-width="1"/>
<line x1="582.5" y1="378" x2="582.5" y2="953" stroke="#d4d4d4" stroke-width="1"/>
<line x1="785.5" y1="378" x2="785.5" y2="953" stroke="#d4d4d4" stroke-width="1"/>
<line x1="882.5" y1="378" x2="882.5" y2="953" stroke="#d4d4d4" stroke-width="1"/>
<line x1="979.5" y1="378" x2="979.5" y2="953" stroke="#d4d4d4" stroke-width="1"/>
<line x1="1076.5" y1="378" x2="1076.5" y2="953" stroke="#d4d4d4" stroke-width="1"/>
<line x1="1173.5" y1="378" x2="1173.5" y2="953" stroke="#d4d4d4" stroke-width="1"/>
<line x1="1270.5" y1="378" x2="1270.5" y2="953" stroke="#d4d4d4" stroke-width="1"/>
<line x1="1367.5" y1="378" x2="1367.5" y2="953" stroke="#d4d4d4" stroke-width="1"/>
<line x1="1464.5" y1="378" x2="1464.5" y2="953" stroke="#d4d4d4" stroke-width="1"/>
<line x1="1561.5" y1="378" x2="1561.5" y2="953" stroke="#d4d4d4" stroke-width="1"/>
<line x1="1658.5" y1="378" x2="1658.5" y2="953" stroke="#d4d4d4" stroke-width="1"/>
<line x1="1737.5" y1="378" x2="1737.5" y2="953" stroke="#d4d4d4" stroke-width="1"/>
<line x1="1827.5" y1="378" x2="1827.5" y2="953" stroke="#d4d4d4" stroke-width="1"/>
<rect x="39.5" y="327.5" width="746.0" height="51" fill="#a9d08e"/>
<rect x="785.5" y="327.5" width="873.0" height="51" fill="#70ad47"/>
<rect x="1658.5" y="327.5" width="231.0" height="51" fill="#a9d08e"/>
<line x1="178.5" y1="327.5" x2="178.5" y2="378.5" stroke="#000000" stroke-width="1.5"/>
<line x1="317.5" y1="327.5" x2="317.5" y2="378.5" stroke="#000000" stroke-width="1.5"/>
<line x1="456.5" y1="327.5" x2="456.5" y2="378.5" stroke="#000000" stroke-width="1.5"/>
<line x1="582.5" y1="327.5" x2="582.5" y2="378.5" stroke="#000000" stroke-width="1.5"/>
<line x1="785.5" y1="327.5" x2="785.5" y2="378.5" stroke="#000000" stroke-width="1.5"/>
<line x1="1658.5" y1="327.5" x2="1658.5" y2="378.5" stroke="#000000" stroke-width="1.5"/>
<line x1="1737.5" y1="327.5" x2="1737.5" y2="378.5" stroke="#000000" stroke-width="1.5"/>
<line x1="1827.5" y1="327.5" x2="1827.5" y2="378.5" stroke="#000000" stroke-width="1.5"/>
<line x1="39.5" y1="378" x2="785.5" y2="378" stroke="#000000" stroke-width="1.5"/>
<line x1="1658.5" y1="378" x2="1889.5" y2="378" stroke="#000000" stroke-width="1.5"/>
<rect x="1561.5" y="299.5" width="97" height="28" fill="#d2d2d2"/>
<line x1="1561.5" y1="326.5" x2="1658.5" y2="326.5" stroke="#217346" stroke-width="2"/>
<line x1="39.5" y1="299.5" x2="39.5" y2="327.5" stroke="#b4b4b4" stroke-width="1"/>
<line x1="178.5" y1="299.5" x2="178.5" y2="327.5" stroke="#b4b4b4" stroke-width="1"/>
<line x1="317.5" y1="299.5" x2="317.5" y2="327.5" stroke="#b4b4b4" stroke-width="1"/>
<line x1="456.5" y1="299.5" x2="456.5" y2="327.5" stroke="#b4b4b4" stroke-width="1"/>
<line x1="582.5" y1="299.5" x2="582.5" y2="327.5" stroke="#b4b4b4" stroke-width="1"/>
<line x1="785.5" y1="299.5" x2="785.5" y2="327.5" stroke="#b4b4b4" stroke-width="1"/>
<line x1="882.5" y1="299.5" x2="882.5" y2="327.5" stroke="#b4b4b4" stroke-width="1"/>
<line x1="979.5" y1="299.5" x2="979.5" y2="327.5" stroke="#b4b4b4" stroke-width="1"/>
<line x1="1076.5" y1="299.5" x2="1076.5" y2="327.5" stroke="#b4b4b4" stroke-width="1"/>
<line x1="1173.5" y1="299.5" x2="1173.5" y2="327.5" stroke="#b4b4b4" stroke-width="1"/>
<line x1="1270.5" y1="299.5" x2="1270.5" y2="327.5" stroke="#b4b4b4" stroke-width="1"/>
<line x1="1367.5" y1="299.5" x2="1367.5" y2="327.5" stroke="#b4b4b4" stroke-width="1"/>
<line x1="1464.5" y1="299.5" x2="1464.5" y2="327.5" stroke="#b4b4b4" stroke-width="1"/>
<line x1="1561.5" y1="299.5" x2="1561.5" y2="327.5" stroke="#b4b4b4" stroke-width="1"/>
<line x1="1658.5" y1="299.5" x2="1658.5" y2="327.5" stroke="#b4b4b4" stroke-width="1"/>
<line x1="1737.5" y1="299.5" x2="1737.5" y2="327.5" stroke="#b4b4b4" stroke-width="1"/>
<line x1="1827.5" y1="299.5" x2="1827.5" y2="327.5" stroke="#b4b4b4" stroke-width="1"/>
<line x1="0" y1="327.5" x2="1889.5" y2="327.5" stroke="#9b9b9b" stroke-width="1.3"/>
<line x1="39.5" y1="299.5" x2="39.5" y2="953" stroke="#bfbfbf" stroke-width="1"/>
<path d="M15.5,323.5 L35.5,303.5 V323.5 Z" fill="#b4b4b4" stroke="none" stroke-width="1"/>
<text x="109.0" y="321.5" font-size="19" fill="#000000" text-anchor="middle">A</text>
<text x="248.0" y="321.5" font-size="19" fill="#000000" text-anchor="middle">B</text>
<text x="387.0" y="321.5" font-size="19" fill="#000000" text-anchor="middle">C</text>
<text x="519.5" y="321.5" font-size="19" fill="#000000" text-anchor="middle">D</text>
<text x="684.0" y="321.5" font-size="19" fill="#000000" text-anchor="middle">E</text>
<text x="834.0" y="321.5" font-size="19" fill="#000000" text-anchor="middle">F</text>
<text x="931.0" y="321.5" font-size="19" fill="#000000" text-anchor="middle">G</text>
<text x="1028.0" y="321.5" font-size="19" fill="#000000" text-anchor="middle">H</text>
<text x="1125.0" y="321.5" font-size="19" fill="#000000" text-anchor="middle">I</text>
<text x="1222.0" y="321.5" font-size="19" fill="#000000" text-anchor="middle">J</text>
<text x="1319.0" y="321.5" font-size="19" fill="#000000" text-anchor="middle">K</text>
<text x="1416.0" y="321.5" font-size="19" fill="#000000" text-anchor="middle">L</text>
<text x="1513.0" y="321.5" font-size="19" fill="#000000" text-anchor="middle">M</text>
<text x="1610.0" y="321.5" font-size="19" fill="#217346" text-anchor="middle">N</text>
<text x="1698.0" y="321.5" font-size="19" fill="#000000" text-anchor="middle">O</text>
<text x="1782.5" y="321.5" font-size="19" fill="#000000" text-anchor="middle">P</text>
<rect x="0" y="552.5" width="39.5" height="29" fill="#d2d2d2"/>
<line x1="38.5" y1="552.5" x2="38.5" y2="581.5" stroke="#217346" stroke-width="2"/>
<line x1="0" y1="378.5" x2="39.5" y2="378.5" stroke="#ababab" stroke-width="1"/>
<text x="19.8" y="372.2" font-size="19.8" fill="#000000" text-anchor="middle">1</text>
<line x1="0" y1="407.5" x2="39.5" y2="407.5" stroke="#ababab" stroke-width="1"/>
<text x="19.8" y="401.2" font-size="19.8" fill="#000000" text-anchor="middle">2</text>
<line x1="0" y1="436.5" x2="39.5" y2="436.5" stroke="#ababab" stroke-width="1"/>
<text x="19.8" y="430.2" font-size="19.8" fill="#000000" text-anchor="middle">3</text>
<line x1="0" y1="465.5" x2="39.5" y2="465.5" stroke="#ababab" stroke-width="1"/>
<text x="19.8" y="459.2" font-size="19.8" fill="#000000" text-anchor="middle">4</text>
<line x1="0" y1="494.5" x2="39.5" y2="494.5" stroke="#ababab" stroke-width="1"/>
<text x="19.8" y="488.2" font-size="19.8" fill="#000000" text-anchor="middle">5</text>
<line x1="0" y1="523.5" x2="39.5" y2="523.5" stroke="#ababab" stroke-width="1"/>
<text x="19.8" y="517.2" font-size="19.8" fill="#000000" text-anchor="middle">6</text>
<line x1="0" y1="552.5" x2="39.5" y2="552.5" stroke="#ababab" stroke-width="1"/>
<text x="19.8" y="546.2" font-size="19.8" fill="#000000" text-anchor="middle">7</text>
<line x1="0" y1="581.5" x2="39.5" y2="581.5" stroke="#ababab" stroke-width="1"/>
<text x="19.8" y="575.2" font-size="19.8" fill="#217346" text-anchor="middle">8</text>
<line x1="0" y1="610.5" x2="39.5" y2="610.5" stroke="#ababab" stroke-width="1"/>
<text x="19.8" y="604.2" font-size="19.8" fill="#000000" text-anchor="middle">9</text>
<line x1="0" y1="639.5" x2="39.5" y2="639.5" stroke="#ababab" stroke-width="1"/>
<text x="19.8" y="633.2" font-size="19.8" fill="#000000" text-anchor="middle">10</text>
<line x1="0" y1="668.5" x2="39.5" y2="668.5" stroke="#ababab" stroke-width="1"/>
<text x="19.8" y="662.2" font-size="19.8" fill="#000000" text-anchor="middle">11</text>
<line x1="0" y1="697.5" x2="39.5" y2="697.5" stroke="#ababab" stroke-width="1"/>
<text x="19.8" y="691.2" font-size="19.8" fill="#000000" text-anchor="middle">12</text>
<line x1="0" y1="726.5" x2="39.5" y2="726.5" stroke="#ababab" stroke-width="1"/>
<text x="19.8" y="720.2" font-size="19.8" fill="#000000" text-anchor="middle">13</text>
<line x1="0" y1="755.5" x2="39.5" y2="755.5" stroke="#ababab" stroke-width="1"/>
<text x="19.8" y="749.2" font-size="19.8" fill="#000000" text-anchor="middle">14</text>
<line x1="0" y1="784.5" x2="39.5" y2="784.5" stroke="#ababab" stroke-width="1"/>
<text x="19.8" y="778.2" font-size="19.8" fill="#000000" text-anchor="middle">15</text>
<line x1="0" y1="813.5" x2="39.5" y2="813.5" stroke="#ababab" stroke-width="1"/>
<text x="19.8" y="807.2" font-size="19.8" fill="#000000" text-anchor="middle">16</text>
<line x1="0" y1="842.5" x2="39.5" y2="842.5" stroke="#ababab" stroke-width="1"/>
<text x="19.8" y="836.2" font-size="19.8" fill="#000000" text-anchor="middle">17</text>
<line x1="0" y1="871.5" x2="39.5" y2="871.5" stroke="#ababab" stroke-width="1"/>
<text x="19.8" y="865.2" font-size="19.8" fill="#000000" text-anchor="middle">18</text>
<line x1="0" y1="900.5" x2="39.5" y2="900.5" stroke="#ababab" stroke-width="1"/>
<text x="19.8" y="894.2" font-size="19.8" fill="#000000" text-anchor="middle">19</text>
<line x1="0" y1="929.5" x2="39.5" y2="929.5" stroke="#ababab" stroke-width="1"/>
<text x="19.8" y="923.2" font-size="19.8" fill="#000000" text-anchor="middle">20</text>
<line x1="0" y1="958.5" x2="39.5" y2="958.5" stroke="#ababab" stroke-width="1"/>
<text x="19.8" y="952.2" font-size="19.8" fill="#000000" text-anchor="middle">21</text>
<text x="61.5" y="361" font-size="20.3" fill="#ff0000" font-weight="bold" textLength="95.0" lengthAdjust="spacingAndGlyphs">Mã tài sản</text>
<text x="198.5" y="361" font-size="20.3" fill="#ff0000" font-weight="bold" textLength="99.0" lengthAdjust="spacingAndGlyphs">Tên tài sản</text>
<text x="359.5" y="361" font-size="20.3" fill="#000000" font-weight="bold" textLength="54.5" lengthAdjust="spacingAndGlyphs">Mô tả</text>
<text x="468.0" y="361" font-size="20.3" fill="#ff0000" font-weight="bold" textLength="103.0" lengthAdjust="spacingAndGlyphs">Loại tài sản</text>
<text x="592.0" y="361" font-size="20.3" fill="#ff0000" font-weight="bold" textLength="184.0" lengthAdjust="spacingAndGlyphs">Trạng thái khấu hao</text>
<text x="1662.0" y="361" font-size="20.3" fill="#ff0000" font-weight="bold" textLength="71.0" lengthAdjust="spacingAndGlyphs">Đơn giá</text>
<text x="1741.0" y="361" font-size="20.3" fill="#ff0000" font-weight="bold" textLength="83.0" lengthAdjust="spacingAndGlyphs">Số lượng</text>
<svg x="1827.5" y="327" width="62.0" height="51"><text x="21" y="34" font-size="20.3" fill="#ff0000" font-weight="bold" textLength="64" lengthAdjust="spacingAndGlyphs">Đơn vị</text></svg>
<svg x="786.3" y="327" width="96.2" height="51"><text x="1" y="45" font-size="20.3" fill="#000000" font-weight="bold" textLength="102" lengthAdjust="spacingAndGlyphs">ng sử dụng</text></svg>
<svg x="883.3" y="327" width="96.2" height="51"><text x="1" y="45" font-size="20.3" fill="#000000" font-weight="bold" textLength="102" lengthAdjust="spacingAndGlyphs">ng sử dụng</text></svg>
<svg x="980.3" y="327" width="96.2" height="51"><text x="-2" y="45" font-size="20.3" fill="#000000" font-weight="bold" textLength="107" lengthAdjust="spacingAndGlyphs">in sửa chữa</text></svg>
<svg x="1077.3" y="327" width="96.2" height="51"><text x="-2" y="45" font-size="20.3" fill="#000000" font-weight="bold" textLength="107" lengthAdjust="spacingAndGlyphs">in sửa chữa</text></svg>
<svg x="1174.3" y="327" width="96.2" height="51"><text x="-2" y="45" font-size="20.3" fill="#000000" font-weight="bold" textLength="107" lengthAdjust="spacingAndGlyphs">in sửa chữa</text></svg>
<svg x="1271.3" y="327" width="96.2" height="51"><text x="1" y="45" font-size="20.3" fill="#000000" font-weight="bold" textLength="102" lengthAdjust="spacingAndGlyphs">ng sử dụng</text></svg>
<svg x="1368.3" y="327" width="96.2" height="51"><text x="1" y="45" font-size="20.3" fill="#000000" font-weight="bold" textLength="102" lengthAdjust="spacingAndGlyphs">ng sử dụng</text></svg>
<svg x="1465.3" y="327" width="96.2" height="51"><text x="1" y="45" font-size="20.3" fill="#000000" font-weight="bold" textLength="102" lengthAdjust="spacingAndGlyphs">ng sử dụng</text></svg>
<svg x="1562.3" y="327" width="96.2" height="51"><text x="1" y="45" font-size="20.3" fill="#000000" font-weight="bold" textLength="102" lengthAdjust="spacingAndGlyphs">ng sử dụng</text></svg>
<rect x="1561.5" y="552" width="97.5" height="29.5" fill="none" stroke="#217346" stroke-width="2.2"/>
<rect x="1654.5" y="578" width="6" height="6" fill="#217346" stroke="#ffffff" stroke-width="1"/>
<rect x="1889.5" y="299.5" width="6.5" height="696.5" fill="#e6e6e6"/>
<rect x="1892.5" y="300.5" width="10" height="24" fill="#ffffff" stroke="#8a8a8a" stroke-width="1"/>
<rect x="1892" y="300" width="4" height="654" fill="#f0f0f0"/>
<rect x="1892.5" y="325.5" width="10" height="572.5" fill="#ffffff" stroke="#8a8a8a" stroke-width="1"/>
<rect x="1892.5" y="930.5" width="10" height="24" fill="#ffffff" stroke="#8a8a8a" stroke-width="1"/>
<line x1="1889.5" y1="327.5" x2="1889.5" y2="953" stroke="#a0a0a0" stroke-width="1"/>
<rect x="0" y="953" width="1896" height="35" fill="#e6e6e6"/>
<line x1="0" y1="953.5" x2="1896" y2="953.5" stroke="#a0a0a0" stroke-width="1.3"/>
<path d="M35,964 l-6,5.5 l6,5.5 z" fill="#c4c4c4" stroke="none" stroke-width="1"/>
<path d="M64,964 l6,5.5 l-6,5.5 z" fill="#c4c4c4" stroke="none" stroke-width="1"/>
<rect x="118.5" y="953.5" width="314" height="29.5" fill="#ffffff"/>
<line x1="118.5" y1="953" x2="118.5" y2="983" stroke="#a0a0a0" stroke-width="1.2"/>
<line x1="432.5" y1="953" x2="432.5" y2="983" stroke="#a0a0a0" stroke-width="1.2"/>
<line x1="118.5" y1="983" x2="432.5" y2="983" stroke="#217346" stroke-width="2.2"/>
<text x="129.5" y="975" font-size="20" fill="#217346" font-weight="bold" textLength="291.0" lengthAdjust="spacingAndGlyphs">Update thông tin đồng bộ SAP</text>
<text x="447.5" y="975" font-size="20" fill="#404040" font-weight="normal" textLength="74.5" lengthAdjust="spacingAndGlyphs">Init Data</text>
<line x1="538.5" y1="957.5" x2="538.5" y2="982.5" stroke="#a0a0a0" stroke-width="1.2"/>
<circle cx="589" cy="970" r="10.5" fill="none" stroke="#737373" stroke-width="1.5"/>
<path d="M583,970 h12 M589,964 v12" fill="none" stroke="#737373" stroke-width="1.8"/>
<rect x="1148" y="962.5" width="3" height="3" fill="#a6a6a6"/>
<rect x="1148" y="968.5" width="3" height="3" fill="#a6a6a6"/>
<rect x="1148" y="974.5" width="3" height="3" fill="#a6a6a6"/>
<rect x="1192" y="957.5" width="674" height="24.5" fill="#f3f3f3"/>
<rect x="1168.5" y="957.5" width="24" height="24" fill="#ffffff" stroke="#8a8a8a" stroke-width="1"/>
<path d="M1183,964 l-6,5.5 l6,5.5 z" fill="#262626" stroke="none" stroke-width="1"/>
<rect x="1192.5" y="957.5" width="100" height="24" fill="#ffffff" stroke="#8a8a8a" stroke-width="1"/>
<rect x="1866.5" y="957.5" width="23" height="24" fill="#ffffff" stroke="#8a8a8a" stroke-width="1"/>
<path d="M1875,964 l6,5.5 l-6,5.5 z" fill="#262626" stroke="none" stroke-width="1"/>
<rect x="0" y="988" width="1896" height="8" fill="#f3f3f3"/>
<line x1="0" y1="987.5" x2="1896" y2="987.5" stroke="#c8c8c8" stroke-width="1"/>
<rect x="1475" y="988" width="60" height="8" fill="#c6c6c6"/>
<path d="M1495.5,996 v-3.5 h19 v3.5 M1501.5,992.5 v4 M1508.5,992.5 v4" fill="none" stroke="#5a5a5a" stroke-width="1.2"/>
<path d="M1555.5,996 v-3.5 h19 v3.5" fill="none" stroke="#5a5a5a" stroke-width="1.2"/>
<path d="M1615.5,996 v-3.5 h19 v3.5 M1621.5,992.5 v4 M1628.5,992.5 v4" fill="none" stroke="#5a5a5a" stroke-width="1.2"/>
<rect x="1753" y="993" width="8" height="3" fill="#333"/>
</svg></body></html>
